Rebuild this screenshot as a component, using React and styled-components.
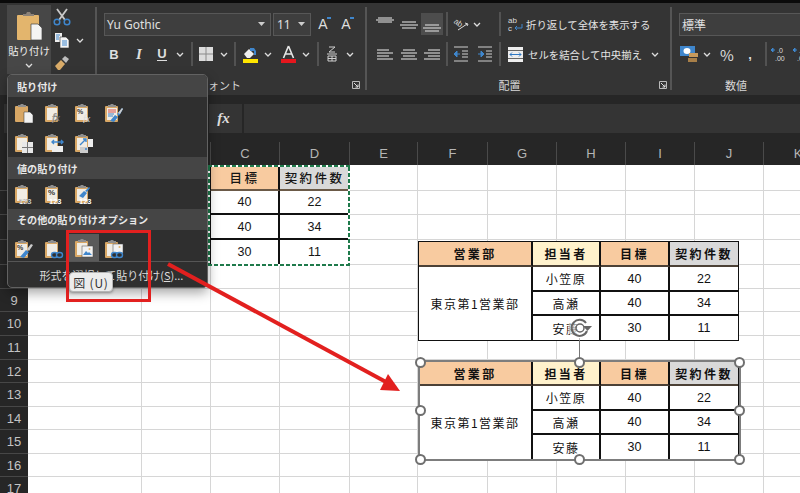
import React from "react";
import styled, { createGlobalStyle } from "styled-components";

const JP = `"Noto Sans CJK JP", "Noto Sans", sans-serif`;
const ARIAL = `"Liberation Sans", Arial, sans-serif`;

const Global = createGlobalStyle`
  html, body { margin: 0; padding: 0; background: #fff; overflow: hidden; }
  * { box-sizing: border-box; }
`;

const Page = styled.div`
  position: relative;
  width: 800px;
  height: 493px;
  overflow: hidden;
  display: flex;
  flex-direction: column;
  background: #fff;
  font-family: ${JP};
`;

const TopStrip = styled.div`
  height: 3px;
  flex: none;
  background: #0a0a0a;
`;

const Ribbon = styled.div`
  height: 92px;
  flex: none;
  display: flex;
  background: #343434;
  padding-left: 7px;
  color: #e2e2e2;
`;

const Group = styled.section`
  position: relative;
  flex: none;
  width: ${(p) => p.$w}px;
  margin: 4px 0 5px;
  padding: 6px 0 0 ${(p) => p.$pl || 0}px;
  border-right: ${(p) => (p.$last ? "none" : "2px solid #555")};
  display: flex;
  flex-direction: column;
  gap: 8px;
`;

const ToolRow = styled.div`
  height: 22px;
  display: flex;
  align-items: center;
  flex: none;
`;

const Tool = styled.div`
  width: ${(p) => p.$w || 20}px;
  height: 22px;
  flex: none;
  margin-left: ${(p) => p.$ml || 0}px;
  display: flex;
  align-items: center;
  justify-content: center;
  background: ${(p) => (p.$active ? "#4d4d4d" : "transparent")};
  font-size: ${(p) => p.$fs || 13}px;
  color: #dedede;
`;

const Divider = styled.div`
  width: ${(p) => p.$w || 6}px;
  margin-left: ${(p) => p.$ml || 0}px;
  height: 24px;
  flex: none;
  display: flex;
  justify-content: center;
  &::before {
    content: "";
    width: 2px;
    background: #525252;
  }
`;

const GroupLabel = styled.div`
  position: absolute;
  left: 0;
  right: 0;
  top: 70px;
  padding-right: ${(p) => p.$pr || 0}px;
  text-align: center;
  font-size: 11px;
  line-height: 16px;
  color: #d8d8d8;
`;

const Launcher = styled.svg`
  position: absolute;
  top: 74px;
  left: ${(p) => p.$left}px;
  width: 9px;
  height: 9px;
`;

const ClipboardPane = styled.div`
  display: flex;
  margin-top: -8px;
`;

const PasteButton = styled.div`
  width: 44px;
  height: 69px;
  background: #474747;
  display: flex;
  flex-direction: column;
  align-items: center;
  padding-top: 7px;
  font-size: 10.4px;
  line-height: 14px;
  color: #eee;
`;

const PasteText = styled.div`
  margin: 3px 0 5px;
  white-space: nowrap;
`;

const ClipTools = styled.div`
  width: 42px;
  padding-left: 1px;
  display: flex;
  flex-direction: column;
  align-items: flex-start;
  gap: 1px;
  padding-top: 1px;
`;

const ClipToolRow = styled.div`
  display: flex;
  align-items: center;
  height: 22px;
`;

const ComboBox = styled.div`
  width: ${(p) => p.$w}px;
  height: 23px;
  margin-right: ${(p) => p.$mr || 0}px;
  flex: none;
  display: flex;
  align-items: center;
  justify-content: space-between;
  padding: 0 5px 0 ${(p) => p.$pl || 2}px;
  background: #3e3e3e;
  border: 1px solid #575757;
  font-family: ${(p) => (p.$jp ? JP : `"Noto Sans", sans-serif`)};
  font-size: 12px;
  color: #e0e0e0;
`;

const CommandText = styled.span`
  font-size: 10.4px;
  white-space: nowrap;
  color: #e4e4e4;
`;

const Spacer = styled.div`
  width: ${(p) => p.$w}px;
  flex: none;
`;

const BoldGlyph = styled.span`
  font-family: ${ARIAL};
  font-weight: 700;
  font-size: 13px;
`;

const ItalicGlyph = styled.span`
  font-family: "Liberation Serif", serif;
  font-style: italic;
  font-weight: 700;
  font-size: 15px;
`;

const UnderGlyph = styled(BoldGlyph)`
  border-bottom: 1.5px solid #ddd;
  line-height: 13px;
`;

const GrowGlyph = styled.span`
  position: relative;
  font-family: ${ARIAL};
  font-size: 14px;
`;

const Caret = styled.i`
  position: absolute;
  right: -3px;
  top: 1px;
  width: 4px;
  height: 2px;
  background: #3f86cc;
`;

const Gap = styled.div`
  height: 9px;
  flex: none;
  background: #262626;
`;

const FormulaBar = styled.div`
  height: 29px;
  flex: none;
  display: flex;
  gap: 2px;
  padding-left: 4px;
  background: #262626;
`;

const NameBox = styled.div`
  width: 203px;
  background: #343434;
`;

const FxBox = styled.div`
  width: 33px;
  padding-right: 4px;
  background: #343434;
  display: flex;
  align-items: center;
  justify-content: center;
  font-family: "Liberation Serif", serif;
  font-style: italic;
  font-weight: 700;
  font-size: 15px;
  color: #ddd;
`;

const FormulaInput = styled.div`
  flex: 1;
  background: #343434;
`;

const ColHeaders = styled.div`
  height: 32px;
  flex: none;
  display: flex;
  padding-top: 9px;
  background: #262626;
`;

const Corner = styled.div`
  width: 28px;
  flex: none;
`;

const ColHead = styled.div`
  width: ${(p) => p.$w}px;
  flex: none;
  display: flex;
  align-items: center;
  justify-content: center;
  border-right: 1px solid #4a4a4a;
  font-family: ${ARIAL};
  font-size: 13px;
  color: #b5b5b5;
`;

const SheetBody = styled.div`
  flex: 1;
  min-height: 0;
  display: flex;
`;

const RowHeaders = styled.div`
  width: 28px;
  flex: none;
  background: #262626;
`;

const RowHead = styled.div`
  height: ${(p) => p.$h}px;
  display: flex;
  align-items: center;
  justify-content: center;
  border-bottom: 1px solid #474747;
  font-family: ${ARIAL};
  font-size: 13px;
  color: #c4c4c4;
`;

const Grid = styled.div`
  position: relative;
  display: grid;
  grid-template-columns: ${(p) => p.$cols};
  grid-template-rows: ${(p) => p.$rows};
`;

const Cell = styled.div`
  display: flex;
  align-items: center;
  justify-content: center;
  white-space: nowrap;
  overflow: hidden;
  background: ${(p) => p.$fill || "#fff"};
  border-right: ${(p) => (p.$r ? "2px solid #111" : "1px solid #d6d6d6")};
  border-bottom: ${(p) => (p.$b ? `2px solid ${p.$fill ? "#6b5a48" : "#111"}` : "1px solid #d6d6d6")};
  font-family: ${(p) => (p.$head ? JP : ARIAL)};
  font-size: 12.5px;
  font-weight: ${(p) => (p.$head ? 500 : 400)};
  letter-spacing: ${(p) => (p.$head ? "2.4px" : "0")};
  color: #151515;
`;

const MarchingAnts = styled.div`
  position: absolute;
  left: 180px;
  top: 0;
  width: 142px;
  height: 101px;
  pointer-events: none;
  background-image:
    linear-gradient(90deg, #1f7a4b 65%, #fff 0),
    linear-gradient(90deg, #1f7a4b 65%, #fff 0),
    linear-gradient(0deg, #1f7a4b 65%, #fff 0),
    linear-gradient(0deg, #1f7a4b 65%, #fff 0);
  background-size: 6px 2px, 6px 2px, 2px 6px, 2px 6px;
  background-position: 0 0, 0 100%, 0 0, 100% 0;
  background-repeat: repeat-x, repeat-x, repeat-y, repeat-y;
`;

const Picture = styled.div`
  position: absolute;
  left: 418px;
  top: ${(p) => p.$top}px;
  display: grid;
  grid-template-columns: 114px 68px 69px 68px;
  grid-template-rows: ${(p) => p.$rows};
  border: 1.5px solid #111;
  background: #fff;
  z-index: 1;
`;

const PicCell = styled.div`
  display: flex;
  align-items: center;
  justify-content: center;
  white-space: nowrap;
  background: ${(p) => p.$fill || "#fff"};
  grid-row: ${(p) => (p.$tall ? "span 3" : "auto")};
  border-right: ${(p) => (p.$end ? "none" : "2px solid #111")};
  border-bottom: ${(p) => (p.$last ? "none" : p.$fill ? "2px solid #4c4136" : "2px solid #111")};
  font-family: ${(p) => (p.$num ? ARIAL : JP)};
  font-size: ${(p) => (p.$num ? 12.5 : 12)}px;
  font-weight: ${(p) => (p.$fill ? 700 : 400)};
  letter-spacing: ${(p) => (p.$num ? "0" : p.$fill ? "2.4px" : "1.5px")};
  color: #111;
`;

const Selection = styled.div`
  position: absolute;
  left: 418px;
  top: 360px;
  width: 323px;
  height: 101px;
  border: 2px solid #7d7d7d;
  pointer-events: none;
  z-index: 1;
`;

const Handle = styled.span`
  position: absolute;
  left: ${(p) => p.$x}%;
  top: ${(p) => p.$y}%;
  width: 11px;
  height: 11px;
  margin: -5.5px 0 0 -5.5px;
  border-radius: 50%;
  background: #fff;
  border: 2px solid #6f6f6f;
`;

const RotateStem = styled.div`
  position: absolute;
  left: 159px;
  top: -24px;
  width: 1px;
  height: 20px;
  background: #777;
`;

const RotateIcon = styled.svg`
  position: absolute;
  left: 147px;
  top: -47px;
  width: 26px;
  height: 26px;
`;

const Menu = styled.div`
  position: absolute;
  left: 7px;
  top: 74px;
  width: 201px;
  height: 214px;
  background: #2f2f2f;
  border: 1px solid #626262;
  border-radius: 5px;
  box-shadow: 0 5px 12px rgba(0, 0, 0, 0.35);
  overflow: hidden;
  z-index: 2;
`;

const MenuTitle = styled.div`
  height: ${(p) => p.$h}px;
  display: flex;
  align-items: center;
  padding-left: 9px;
  background: #454545;
  font-size: 10.1px;
  font-weight: 700;
  color: #e8e8e8;
  white-space: nowrap;
`;

const IconRow = styled.div`
  height: ${(p) => p.$h}px;
  display: flex;
  align-items: ${(p) => p.$align || "center"};
  padding-left: 1px;
`;

const IconCell = styled.div`
  width: 30px;
  height: ${(p) => (p.$on ? 27 : 24)}px;
  display: flex;
  align-items: center;
  justify-content: center;
  background: ${(p) => (p.$on ? "#5a5a5a" : "transparent")};
`;

const MenuFooter = styled.div`
  height: 26px;
  border-top: 1px solid #565656;
  display: flex;
  align-items: center;
  justify-content: center;
  padding-left: 8px;
  font-size: 11px;
  color: #dcdcdc;
  white-space: nowrap;
`;

const Under = styled.span`
  text-decoration: underline;
`;

const RedBox = styled.div`
  position: absolute;
  left: 66px;
  top: 230px;
  width: 85px;
  height: 72px;
  border: 3.5px solid #e2201f;
  z-index: 3;
`;

const ArrowLayer = styled.svg`
  position: absolute;
  left: 0;
  top: 0;
  width: 800px;
  height: 493px;
  pointer-events: none;
  z-index: 3;
`;

const Tip = styled.div`
  position: absolute;
  left: 69px;
  top: 272px;
  width: 44px;
  height: 20px;
  display: flex;
  align-items: center;
  justify-content: center;
  border-radius: 4px;
  border: 1px solid #b5b5b5;
  background: #ececec;
  box-shadow: 0 1px 3px rgba(0, 0, 0, 0.35);
  font-size: 12px;
  letter-spacing: 0.8px;
  color: #333;
  white-space: nowrap;
  z-index: 4;
`;

const Chevron = ({ c = "#ddd" }) => (
  <svg width="8" height="5" viewBox="0 0 8 5">
    <path d="M1 1l3 3 3-3" fill="none" stroke={c} strokeWidth="1.3" />
  </svg>
);

const DropTri = () => (
  <svg width="7" height="4" viewBox="0 0 7 4">
    <path d="M0 0h7L3.5 4z" fill="#ccc" />
  </svg>
);

const LauncherIcon = ({ left }) => (
  <Launcher $left={left} viewBox="0 0 9 9">
    <path d="M.5 .5h7v7h-7z" fill="none" stroke="#bbb" />
    <path d="M2 2l4 4M6 3.5V6H3.5" fill="none" stroke="#ddd" />
  </Launcher>
);

const BigClipboard = () => (
  <svg width="27" height="29" viewBox="0 0 27 29">
    <rect x="1" y="3" width="22" height="25" rx="1" fill="#e3b56d" />
    <path d="M7 4V2h3l1-2h3l1 2h3v2z" fill="#8c8278" />
    <path d="M15 12h7l4 4v12H15z" fill="#f4f4f4" stroke="#444" strokeWidth=".7" />
  </svg>
);

const Scissors = () => (
  <svg width="20" height="18" viewBox="0 0 20 18">
    <path d="M5 1l8 11M15 1L7 12" stroke="#c9c9c9" strokeWidth="1.8" />
    <circle cx="5" cy="14" r="2.8" fill="none" stroke="#3f86cc" strokeWidth="1.5" />
    <circle cx="15" cy="14" r="2.8" fill="none" stroke="#3f86cc" strokeWidth="1.5" />
  </svg>
);

const CopyIcon = () => (
  <svg width="16" height="16" viewBox="0 0 16 16">
    <path d="M1 1h7v9H1z" fill="#eee" />
    <path d="M6 5h6l3 3v8H6z" fill="#f6f6f6" stroke="#333" strokeWidth=".6" />
    <path d="M2 3h4M2 5h3M2 7h3M8 9h5M8 11h5M8 13h5" stroke="#3f86cc" />
  </svg>
);

const BrushIcon = () => (
  <svg width="16" height="16" viewBox="0 0 16 16">
    <path d="M1 11l6-6 4 4-5 6H4z" fill="#d9ab68" />
    <path d="M8 4l3-3 4 3-3 4z" fill="#bdbdbd" />
  </svg>
);

const BorderIcon = () => (
  <svg width="14" height="14" viewBox="0 0 14 14">
    <rect width="14" height="14" fill="#dcdcdc" />
    <path d="M7 0v14M0 7h14" stroke="#8a8a8a" />
  </svg>
);

const FillIcon = () => (
  <svg width="17" height="17" viewBox="0 0 17 17">
    <path d="M2 8l5-5 5 5-4 4H5z" fill="#eee" />
    <path d="M8 2h4l2 3v4h-2V5H8z" fill="#3f86cc" />
    <rect x="1" y="13" width="15" height="4" fill="#ffe600" />
  </svg>
);

const FontColorIcon = () => (
  <svg width="17" height="18" viewBox="0 0 17 18">
    <path d="M8.5 1L3.5 13M8.5 1l5 12M5.500 9h6" fill="none" stroke="#e6e6e6" strokeWidth="1.6" />
    <rect x="1" y="14" width="15" height="4" fill="#e5161d" />
  </svg>
);

const VerticalTextIcon = () => (
  <svg width="12" height="16" viewBox="0 0 12 16">
    <path d="M3 1h6L3 6h6M1 8h10M2 10h8v5H2zM6 10v5M2 12.5h8" fill="none" stroke="#cfcfcf" />
  </svg>
);

const lines = {
  top: [[3, 17, 4], [1, 19, 6], [3, 17, 8]],
  middle: [[3, 17, 8], [1, 19, 11], [3, 17, 14]],
  bottom: [[3, 17, 11], [1, 19, 14], [3, 17, 17]],
  left: [[2, 14, 6], [2, 18, 9], [2, 14, 12], [2, 18, 15]],
  center: [[4, 16, 6], [2, 18, 9], [4, 16, 12], [2, 18, 15]],
  right: [[6, 18, 6], [2, 18, 9], [6, 18, 12], [2, 18, 15]],
};

const AlignIcon = ({ kind }) => (
  <svg width="20" height="20" viewBox="0 0 20 20">
    {lines[kind].map(([a, b, y]) => (
      <path key={y} d={`M${a} ${y}H${b}`} stroke="#cfcfcf" strokeWidth="1.2" />
    ))}
  </svg>
);

const IndentIcon = ({ flip }) => (
  <svg width="16" height="16" viewBox="0 0 16 16">
    <path d="M1 1h14M1 15h14M9 5h6M9 8h6M9 11h6" stroke="#cfcfcf" />
    <path d={flip ? "M1 8h5M4 5l3 3-3 3z" : "M7 8H2M4 5L1 8l3 3z"} fill="#3f86cc" stroke="#3f86cc" />
  </svg>
);

const OrientIcon = () => (
  <svg width="18" height="16" viewBox="0 0 18 16">
    <text x="1" y="9" fontSize="8" fontFamily={ARIAL} fill="#ddd" transform="rotate(35 5 8)">
      ab
    </text>
    <path d="M6 14l9-6M13 7l3 1-1 2" fill="none" stroke="#ddd" />
  </svg>
);

const WrapIcon = () => (
  <svg width="18" height="18" viewBox="0 0 18 18">
    <text x="2" y="8" fontSize="8" fontFamily={ARIAL} fill="#ddd">
      ab
    </text>
    <text x="2" y="16" fontSize="8" fontFamily={ARIAL} fill="#ddd">
      c
    </text>
    <path d="M16 9v4H9M11 11l-2 2 2 2" fill="none" stroke="#3f86cc" />
  </svg>
);

const MergeIcon = () => (
  <svg width="15" height="15" viewBox="0 0 15 15">
    <rect width="15" height="15" fill="#eee" />
    <path d="M0 3.5h15M0 11.5h15" stroke="#666" />
    <path d="M2 7.5h11M4 5.5l-2 2 2 2M11 5.5l2 2-2 2" fill="none" stroke="#2f78c4" />
  </svg>
);

const MoneyIcon = () => (
  <svg width="20" height="18" viewBox="0 0 20 18">
    <rect y="1" width="15" height="10" fill="#3f86cc" />
    <ellipse cx="7" cy="6" rx="3.5" ry="3" fill="#fff" />
    <rect x="9" y="8" width="9" height="4" fill="#c79a5c" />
    <rect x="8" y="13" width="9" height="4" fill="#a87f48" />
  </svg>
);

const DecimalIcon = () => (
  <svg width="18" height="16" viewBox="0 0 18 16">
    <path d="M5 4h-4M3 2L1 4l2 2z" fill="#3f86cc" stroke="#3f86cc" />
    <text x="7" y="6.500" fontSize="7" fontFamily={ARIAL} fill="#ddd">.0</text>
    <text x="5" y="14.500" fontSize="7" fontFamily={ARIAL} fill="#ddd">.00</text>
  </svg>
);

const overlays = {
  paste: <path d="M10 9h6l3 3v8h-9z" fill="#f2f2f2" stroke="#333" strokeWidth=".5" />,
  fx: (
    <text x="8" y="18" fontSize="11" fontStyle="italic" fontFamily="Liberation Serif" fill="#ddd" stroke="#2f2f2f" strokeWidth=".3">
      fx
    </text>
  ),
  pctfx: (
    <>
      <text x="3" y="11" fontSize="7" fontWeight="700" fontFamily={ARIAL} fill="#333">%</text>
      <text x="9" y="19" fontSize="10" fontStyle="italic" fontFamily="Liberation Serif" fill="#ddd">fx</text>
    </>
  ),
  brush: (
    <>
      <path d="M4 7h8M4 9h8" stroke="#d9534f" />
      <path d="M4 11h6M4 13h5" stroke="#3f86cc" />
      <path d="M6 18l5-6 3 2-4 5zM13 11l5-6 1 1-4 7z" fill="#3f86cc" />
      <path d="M14 10l4-5 1 1-3 5z" fill="#ccc" />
    </>
  ),
  table: (
    <>
      <rect x="8" y="9" width="11" height="11" fill="#e8e8e8" />
      <path d="M13.500 9v11M8 14.500h11" stroke="#777" />
    </>
  ),
  width: (
    <>
      <rect x="8" y="13" width="11" height="6" fill="#eee" />
      <path d="M8 9h11M10 7L8 9l2 2M17 7l2 2-2 2" fill="none" stroke="#3f86cc" strokeWidth="1.4" />
    </>
  ),
  swap: (
    <>
      <rect x="14" y="6" width="5" height="8" fill="#eee" />
      <rect x="6" y="14" width="8" height="6" fill="#ccc" />
      <path d="M6 12l6-6M9 6h3v3M13 16l-2 0" fill="none" stroke="#3f86cc" strokeWidth="1.4" />
    </>
  ),
  v123: <text x="5" y="19.5" fontSize="7.5" fontWeight="700" fontFamily={ARIAL} fill="#fff" stroke="#222" strokeWidth=".2">123</text>,
  pct123: (
    <>
      <text x="4" y="11" fontSize="8" fontWeight="700" fontFamily={ARIAL} fill="#333">%</text>
      <text x="5" y="19.5" fontSize="7.5" fontWeight="700" fontFamily={ARIAL} fill="#fff">123</text>
    </>
  ),
  brush123: (
    <>
      <path d="M5 12l5-5 3 2-4 5zM11 7l4-4 1 1-3 4z" fill="#3f86cc" />
      <text x="5" y="19.5" fontSize="7.5" fontWeight="700" fontFamily={ARIAL} fill="#fff">123</text>
    </>
  ),
  brushpct: (
    <>
      <text x="3" y="11" fontSize="7" fontWeight="700" fontFamily={ARIAL} fill="#333">%</text>
      <path d="M6 18l6-7 3 2-5 6z" fill="#3f86cc" />
      <path d="M13 10l4-5 2 1-4 6z" fill="#ccc" />
    </>
  ),
  link: (
    <>
      <rect x="7.5" y="13.5" width="6" height="5" rx="2.5" fill="#2f2f2f" stroke="#3f86cc" strokeWidth="1.4" />
      <rect x="12.5" y="13.5" width="6" height="5" rx="2.5" fill="#2f2f2f" stroke="#3f86cc" strokeWidth="1.4" />
    </>
  ),
  picture: (
    <>
      <rect x="8" y="8" width="11" height="11" fill="#f2f2f2" stroke="#444" strokeWidth=".5" />
      <path d="M9 17l3-4 2 2 1-1 3 3z" fill="#3f86cc" />
      <circle cx="15.5" cy="11" r="1" fill="#e3b56d" />
    </>
  ),
  linkpic: (
    <>
      <rect x="9" y="5" width="10" height="9" fill="#f2f2f2" stroke="#444" strokeWidth=".5" />
      <circle cx="15.5" cy="8" r="1" fill="#e3b56d" />
      <rect x="7.5" y="13.5" width="6" height="5" rx="2.5" fill="#2f2f2f" stroke="#3f86cc" strokeWidth="1.4" />
      <rect x="12.5" y="13.5" width="6" height="5" rx="2.5" fill="#2f2f2f" stroke="#3f86cc" strokeWidth="1.4" />
    </>
  ),
};

const ClipIcon = ({ kind }) => (
  <svg width="20" height="20" viewBox="0 0 20 20">
    <rect x="1" y="3" width="13" height="16" rx="1" fill="#d8a765" />
    {kind !== "paste" && <rect x="3" y="5" width="10" height="12" fill="#f0ece4" />}
    <path d="M4 4V2h2l1-1h2l1 1h2v2z" fill="#8f8f8f" />
    {overlays[kind]}
  </svg>
);

const columns = [
  ["A", 114], ["B", 69], ["C", 69], ["D", 70], ["E", 68], ["F", 70],
  ["G", 69], ["H", 69], ["I", 69], ["J", 69], ["K", 69],
];
const rows = [
  [4, 26], [5, 24], [6, 25], [7, 25], [8, 24], [9, 23], [10, 24],
  [11, 24], [12, 23], [13, 24], [14, 23], [15, 24], [16, 23], [17, 24],
];

const PEACH = "#f8cba0";
const CREAM = "#fff2cc";
const GREY = "#d9d9d9";

const copied = [
  ["担当者", "目標", "契約件数"],
  ["小笠原", "40", "22"],
  ["高瀬", "40", "34"],
  ["安藤", "30", "11"],
];
const headFill = [CREAM, PEACH, GREY];

const SheetCell = ({ r, c }) => {
  const inTable = r < 4 && c >= 1 && c <= 3;
  if (!inTable) return <Cell />;
  const col = c - 1;
  return (
    <Cell
      $head={r === 0}
      $fill={r === 0 ? headFill[col] : undefined}
      $r={col < 2}
      $b={r < 3}
    >
      {col > 0 ? copied[r][col] : ""}
    </Cell>
  );
};

const PictureTable = ({ top, rowSizes }) => (
  <Picture $top={top} $rows={rowSizes}>
    <PicCell $fill={PEACH}>営業部</PicCell>
    <PicCell $fill={CREAM}>担当者</PicCell>
    <PicCell $fill={PEACH}>目標</PicCell>
    <PicCell $fill={GREY} $end>契約件数</PicCell>
    <PicCell $tall $last>東京第1営業部</PicCell>
    {copied.slice(1).map(([name, goal, done], i) => (
      <React.Fragment key={name}>
        <PicCell $last={i === 2}>{name}</PicCell>
        <PicCell $num $last={i === 2}>{goal}</PicCell>
        <PicCell $num $end $last={i === 2}>{done}</PicCell>
      </React.Fragment>
    ))}
  </Picture>
);

const handles = [
  [0, 0], [50, 0], [100, 0], [0, 50], [100, 50], [0, 100], [50, 100], [100, 100],
];

export default function App() {
  return (
    <Page>
      <Global />
      <TopStrip />
      <Ribbon>
        <Group $w={90}>
          <ClipboardPane>
            <PasteButton>
              <BigClipboard />
              <PasteText>貼り付け</PasteText>
              <Chevron />
            </PasteButton>
            <ClipTools>
              <ClipToolRow><Tool><Scissors /></Tool></ClipToolRow>
              <ClipToolRow>
                <Tool><CopyIcon /></Tool>
                <Tool $w={16}><Chevron /></Tool>
              </ClipToolRow>
              <ClipToolRow><Tool><BrushIcon /></Tool></ClipToolRow>
            </ClipTools>
          </ClipboardPane>
        </Group>

        <Group $w={270} $pl={7}>
          <ToolRow>
            <ComboBox $w={167} $mr={2}>Yu Gothic<DropTri /></ComboBox>
            <ComboBox $w={38} $pl={3}>11<DropTri /></ComboBox>
            <Tool $w={24}><GrowGlyph>A<Caret /></GrowGlyph></Tool>
            <Tool $w={22}><GrowGlyph>A<Caret /></GrowGlyph></Tool>
          </ToolRow>
          <ToolRow>
            <Tool $w={20}><BoldGlyph>B</BoldGlyph></Tool>
            <Tool $w={30}><ItalicGlyph>I</ItalicGlyph></Tool>
            <Tool $w={16}><UnderGlyph>U</UnderGlyph></Tool>
            <Tool $w={20}><Chevron /></Tool>
            <Divider $w={4} />
            <Tool $w={24}><BorderIcon /></Tool>
            <Tool $w={12}><Chevron /></Tool>
            <Divider $w={10} />
            <Tool $w={20}><FillIcon /></Tool>
            <Tool $w={16}><Chevron /></Tool>
            <Tool $w={24}><FontColorIcon /></Tool>
            <Tool $w={12}><Chevron /></Tool>
            <Divider $w={12} />
            <Tool $w={16}><VerticalTextIcon /></Tool>
            <Tool $w={20}><Chevron /></Tool>
          </ToolRow>
          <GroupLabel $pr={24}>フォント</GroupLabel>
          <LauncherIcon left={255} />
        </Group>

        <Group $w={305} $pl={7}>
          <ToolRow>
            <Tool $w={22}><AlignIcon kind="top" /></Tool>
            <Spacer $w={2} />
            <Tool $w={22}><AlignIcon kind="middle" /></Tool>
            <Spacer $w={1} />
            <Tool $w={22} $active><AlignIcon kind="bottom" /></Tool>
            <Divider $w={8} />
            <Tool $w={20}><OrientIcon /></Tool>
            <Tool $w={12}><Chevron /></Tool>
            <Divider $w={6} $ml={14} />
            <Tool $w={18} $ml={3}><WrapIcon /></Tool>
            <Spacer $w={2} />
            <CommandText>折り返して全体を表示する</CommandText>
          </ToolRow>
          <ToolRow>
            <Tool $w={22}><AlignIcon kind="left" /></Tool>
            <Spacer $w={2} />
            <Tool $w={22}><AlignIcon kind="center" /></Tool>
            <Spacer $w={1} />
            <Tool $w={22}><AlignIcon kind="right" /></Tool>
            <Divider $w={8} />
            <Tool $w={20}><IndentIcon /></Tool>
            <Spacer $w={4} />
            <Tool $w={20}><IndentIcon flip /></Tool>
            <Divider $w={6} $ml={2} />
            <Tool $w={15} $ml={5}><MergeIcon /></Tool>
            <Spacer $w={5} />
            <CommandText>セルを結合して中央揃え</CommandText>
            <Spacer $w={7} />
            <Tool $w={12}><Chevron /></Tool>
          </ToolRow>
          <GroupLabel $pr={18}>配置</GroupLabel>
          <LauncherIcon left={292} />
        </Group>

        <Group $w={128} $pl={7} $last>
          <ToolRow>
            <ComboBox $w={140} $jp>標準</ComboBox>
          </ToolRow>
          <ToolRow>
            <Tool $w={21}><MoneyIcon /></Tool>
            <Tool $w={13}><Chevron /></Tool>
            <Spacer $w={4} />
            <Tool $w={20} $fs={15}>%</Tool>
            <Spacer $w={3} />
            <Tool $w={20}><BoldGlyph>,</BoldGlyph></Tool>
            <Divider $w={6} $ml={3} />
            <Tool $w={20}><DecimalIcon /></Tool>
            <Tool $w={20} $ml={2}><DecimalIcon /></Tool>
          </ToolRow>
          <GroupLabel>数値</GroupLabel>
        </Group>
      </Ribbon>
      <Gap />
      <FormulaBar>
        <NameBox />
        <FxBox>fx</FxBox>
        <FormulaInput />
      </FormulaBar>
      <ColHeaders>
        <Corner />
        {columns.map(([name, w]) => (
          <ColHead key={name} $w={w}>{name}</ColHead>
        ))}
      </ColHeaders>
      <SheetBody>
        <RowHeaders>
          {rows.map(([n, h]) => (
            <RowHead key={n} $h={h}>{n}</RowHead>
          ))}
        </RowHeaders>
        <Grid
          $cols={columns.map(([, w]) => `${w}px`).join(" ")}
          $rows={rows.map(([, h]) => `${h}px`).join(" ")}
        >
          {rows.map(([n], r) =>
            columns.map(([name], c) => <SheetCell key={name + n} r={r} c={c} />)
          )}
          <MarchingAnts />
        </Grid>
      </SheetBody>

      <PictureTable top={241} rowSizes="25px 25px 24px 24px" />
      <PictureTable top={361} rowSizes="24px 25px 24px 24px" />
      <Selection>
        <RotateStem />
        <RotateIcon viewBox="0 0 26 26">
          <circle cx="13" cy="13" r="12" fill="rgba(255,255,255,.55)" />
          <path d="M20 16a8 8 0 1 1-1-8" fill="none" stroke="#666" strokeWidth="2" />
          <path d="M16 11h9l-4.500 5z" fill="#666" />
          <circle cx="13" cy="13" r="4" fill="none" stroke="#666" strokeWidth="1.5" />
        </RotateIcon>
        {handles.map(([x, y]) => (
          <Handle key={`${x}-${y}`} $x={x} $y={y} />
        ))}
      </Selection>

      <Menu>
        <MenuTitle $h={22}>貼り付け</MenuTitle>
        <IconRow $h={31}>
          {["paste", "fx", "pctfx", "brush"].map((k) => (
            <IconCell key={k}><ClipIcon kind={k} /></IconCell>
          ))}
        </IconRow>
        <IconRow $h={29}>
          {["table", "width", "swap"].map((k) => (
            <IconCell key={k}><ClipIcon kind={k} /></IconCell>
          ))}
        </IconRow>
        <MenuTitle $h={22}>値の貼り付け</MenuTitle>
        <IconRow $h={30}>
          {["v123", "pct123", "brush123"].map((k) => (
            <IconCell key={k}><ClipIcon kind={k} /></IconCell>
          ))}
        </IconRow>
        <MenuTitle $h={21}>その他の貼り付けオプション</MenuTitle>
        <IconRow $h={31} $align="flex-end">
          <IconCell><ClipIcon kind="brushpct" /></IconCell>
          <IconCell><ClipIcon kind="link" /></IconCell>
          <IconCell $on><ClipIcon kind="picture" /></IconCell>
          <IconCell><ClipIcon kind="linkpic" /></IconCell>
        </IconRow>
        <MenuFooter>
          形式を選択して貼り付け(<Under>S</Under>)...
        </MenuFooter>
      </Menu>

      <RedBox />
      <ArrowLayer viewBox="0 0 800 493">
        <path d="M168 264L386 382" stroke="#e2201f" strokeWidth="4" fill="none" />
        <path d="M388 374L380 390L400 391z" fill="#e2201f" />
      </ArrowLayer>
      <Tip>図 (U)</Tip>
    </Page>
  );
}
